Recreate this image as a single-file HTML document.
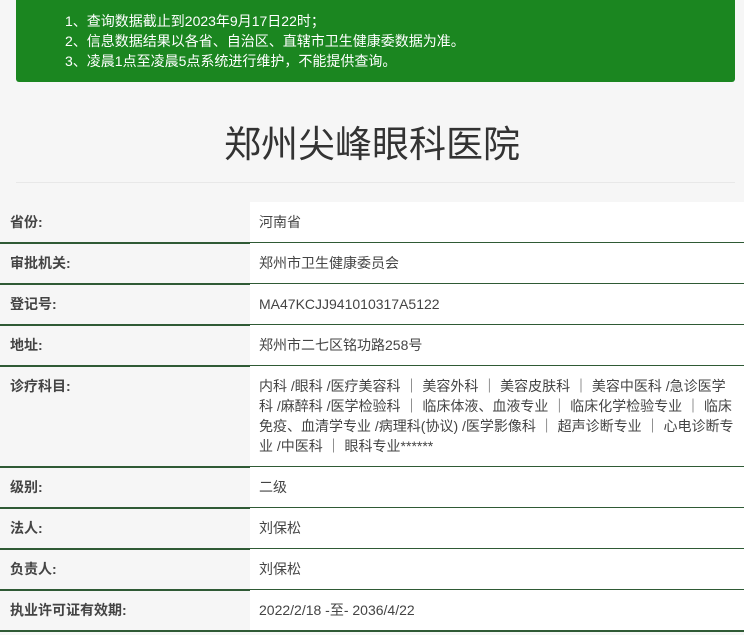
<!DOCTYPE html>
<html><head><meta charset="utf-8"><style>
*{margin:0;padding:0;box-sizing:border-box}
body{width:744px;height:635px;background:#f6f6f6;font-family:"Liberation Sans","Noto Sans CJK SC",sans-serif;overflow:hidden;position:relative;color:#333}
.note{position:absolute;left:16px;top:0;width:719px;height:82px;background:#1b8620;border-radius:0 0 3px 3px;color:#fff;font-size:14px;line-height:20px;padding:11px 0 0 49px}
h1{position:absolute;left:0;width:744px;top:120px;text-align:center;font-weight:normal;font-size:37px;color:#333;line-height:50px}
.hr{position:absolute;left:16px;width:719px;top:182px;height:1px;background:#e8e8e8}
.row{position:absolute;left:0;width:744px;border-bottom:2px solid #2f5a35;font-size:14px}
.row .l{position:absolute;left:0;top:0;bottom:0;width:250px;padding:10px 0 0 10px;font-weight:bold;color:#444;line-height:20px}
.row .r{position:absolute;left:250px;top:0;bottom:0;right:0;background:#fff;padding:10px 6px 0 9px;line-height:20px;color:#444}
</style></head><body>
<div class="note">1、查询数据截止到2023年9月17日22时；<br>2、信息数据结果以各省、自治区、直辖市卫生健康委数据为准。<br>3、凌晨1点至凌晨5点系统进行维护，不能提供查询。</div>
<h1>郑州尖峰眼科医院</h1>
<div class="hr"></div>
<div class="row" style="top:202px;height:42px"><div class="l">省份:</div><div class="r">河南省</div></div>
<div class="row" style="top:243px;height:42px"><div class="l">审批机关:</div><div class="r">郑州市卫生健康委员会</div></div>
<div class="row" style="top:284px;height:42px"><div class="l">登记号:</div><div class="r">MA47KCJJ941010317A5122</div></div>
<div class="row" style="top:325px;height:42px"><div class="l">地址:</div><div class="r">郑州市二七区铭功路258号</div></div>
<div class="row" style="top:366px;height:102px"><div class="l">诊疗科目:</div><div class="r">内科 /眼科 /医疗美容科 ｜ 美容外科 ｜ 美容皮肤科 ｜ 美容中医科 /急诊医学科 /麻醉科 /医学检验科 ｜ 临床体液、血液专业 ｜ 临床化学检验专业 ｜ 临床免疫、血清学专业 /病理科(协议) /医学影像科 ｜ 超声诊断专业 ｜ 心电诊断专业 /中医科 ｜ 眼科专业******</div></div>
<div class="row" style="top:467px;height:42px"><div class="l">级别:</div><div class="r">二级</div></div>
<div class="row" style="top:508px;height:42px"><div class="l">法人:</div><div class="r">刘保松</div></div>
<div class="row" style="top:549px;height:42px"><div class="l">负责人:</div><div class="r">刘保松</div></div>
<div class="row" style="top:590px;height:42px"><div class="l">执业许可证有效期:</div><div class="r">2022/2/18 -至- 2036/4/22</div></div>
</body></html>
